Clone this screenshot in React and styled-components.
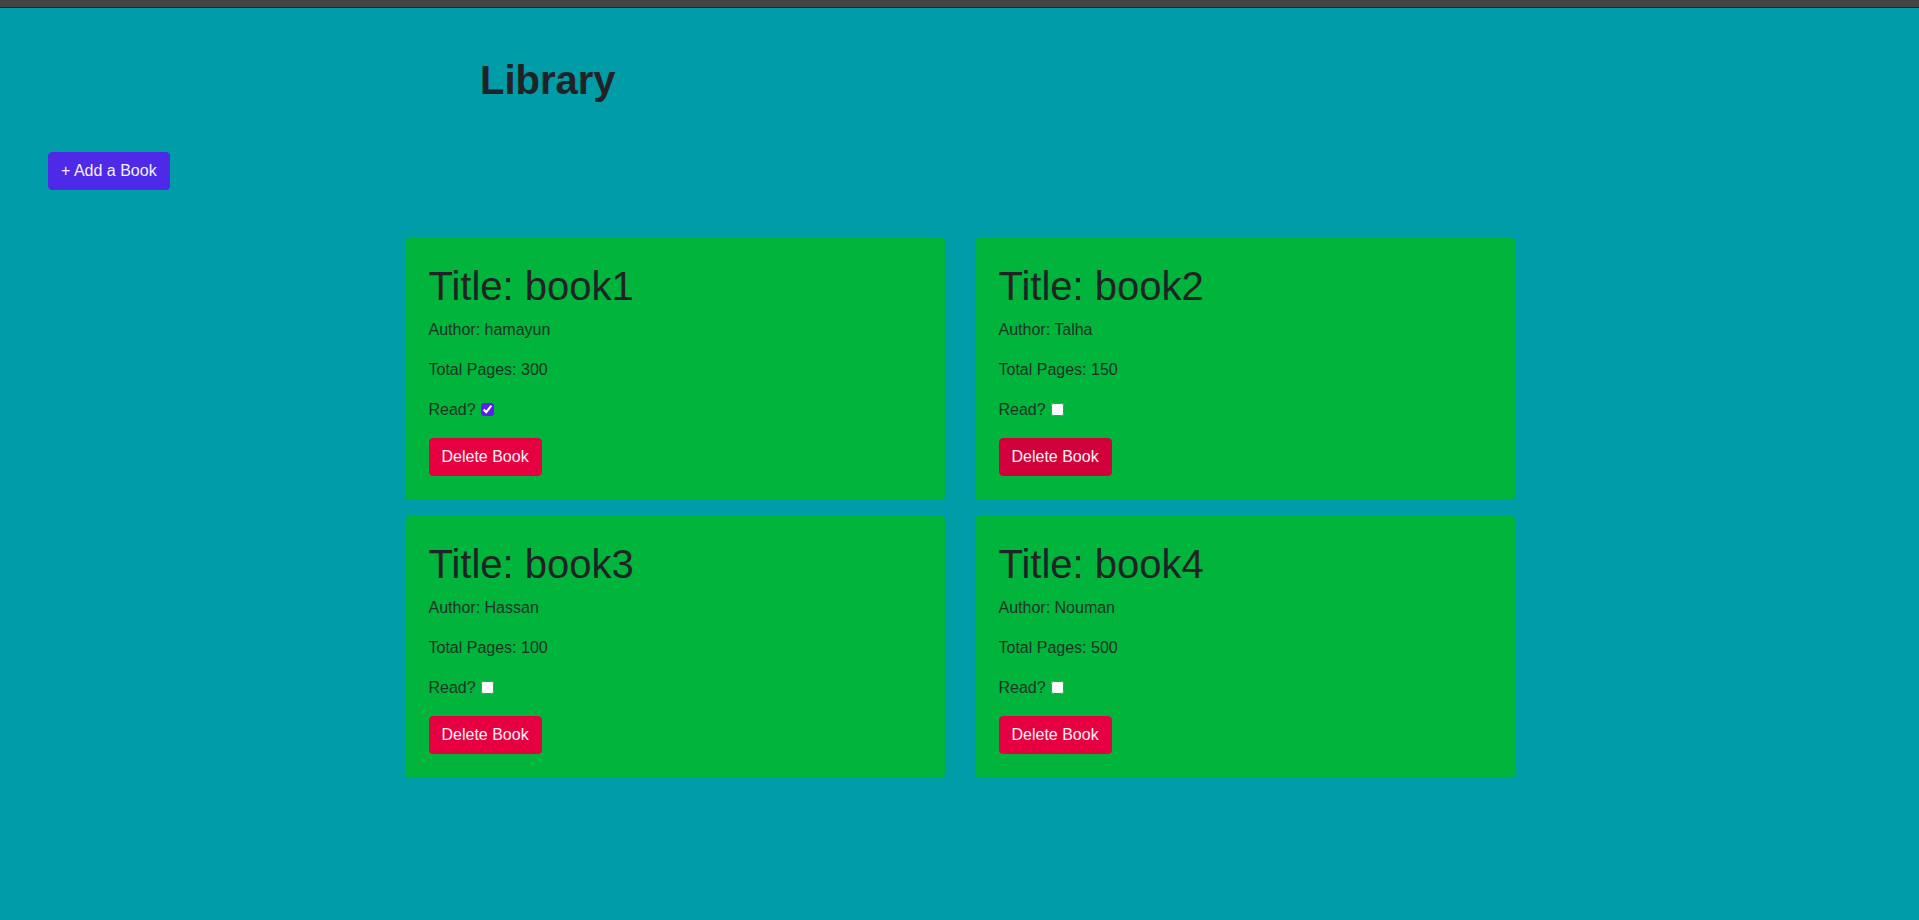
import React, { useState } from "react";
import styled, { createGlobalStyle } from "styled-components";

const GlobalStyle = createGlobalStyle`
  *, *::before, *::after { box-sizing: border-box; }
  html, body { margin: 0; padding: 0; }
  body {
    background: #009ca8;
    font-family: "Liberation Sans", Arial, sans-serif;
    font-size: 16px;
    line-height: 1.5;
    color: #212529;
    min-height: 920px;
  }
`;

const TopBar = styled.div`
  height: 8px;
  background: #434343;
  border-bottom: 1px solid #262626;
`;

const Header = styled.header`
  padding: 48px 0 0 480px;
`;

const PageTitle = styled.h1`
  margin: 0;
  font-size: 40px;
  line-height: 1.2;
  font-weight: 700;
  color: #1f2326;
`;

const Toolbar = styled.div`
  padding: 48px 0 0 48px;
`;

const Button = styled.button`
  display: inline-block;
  font-family: "Liberation Sans", Arial, sans-serif;
  font-size: 16px;
  line-height: 1.5;
  padding: 6px 12px;
  border: 1px solid ${(p) => p.$bg};
  border-radius: 4px;
  background: ${(p) => p.$bg};
  color: ${(p) => p.$fg};
  cursor: pointer;
`;

const Container = styled.main`
  width: 1110px;
  margin: 48px auto 0;
  display: grid;
  grid-template-columns: 540px 540px;
  column-gap: 30px;
  row-gap: 16px;
`;

const Card = styled.section`
  background: #00b43c;
  border-radius: 4px;
  padding: 24px;
`;

const CardTitle = styled.h2`
  margin: 0 0 8px;
  font-size: 40px;
  line-height: 1.2;
  font-weight: 400;
  color: #1f2326;
`;

const Line = styled.p`
  margin: 0 0 16px;
  color: #1b3326;
`;

const Check = styled.input`
  accent-color: #5a1ff0;
  width: 13px;
  height: 13px;
  margin: 0 0 0 1px;
  vertical-align: -1px;
`;

const initialBooks = [
  { title: "book1", author: "hamayun", pages: 300, read: true },
  { title: "book2", author: "Talha", pages: 150, read: false },
  { title: "book3", author: "Hassan", pages: 100, read: false },
  { title: "book4", author: "Nouman", pages: 500, read: false },
];

export default function App() {
  const [books, setBooks] = useState(initialBooks);
  const toggle = (i) =>
    setBooks((b) => b.map((x, j) => (j === i ? { ...x, read: !x.read } : x)));

  return (
    <>
      <GlobalStyle />
      <TopBar />
      <Header>
        <PageTitle>Library</PageTitle>
      </Header>
      <Toolbar>
        <Button $bg="#4e2ae8" $fg="#f2f0ff">+ Add a Book</Button>
      </Toolbar>
      <Container>
        {books.map((b, i) => (
          <Card key={b.title}>
            <CardTitle>Title: {b.title}</CardTitle>
            <Line>Author: {b.author}</Line>
            <Line>Total Pages: {b.pages}</Line>
            <Line>
              Read? <Check type="checkbox" checked={b.read} onChange={() => toggle(i)} />
            </Line>
            <Button $bg={i === 1 ? "#d2003a" : "#e60042"} $fg="#fff0f4">
              Delete Book
            </Button>
          </Card>
        ))}
      </Container>
    </>
  );
}
